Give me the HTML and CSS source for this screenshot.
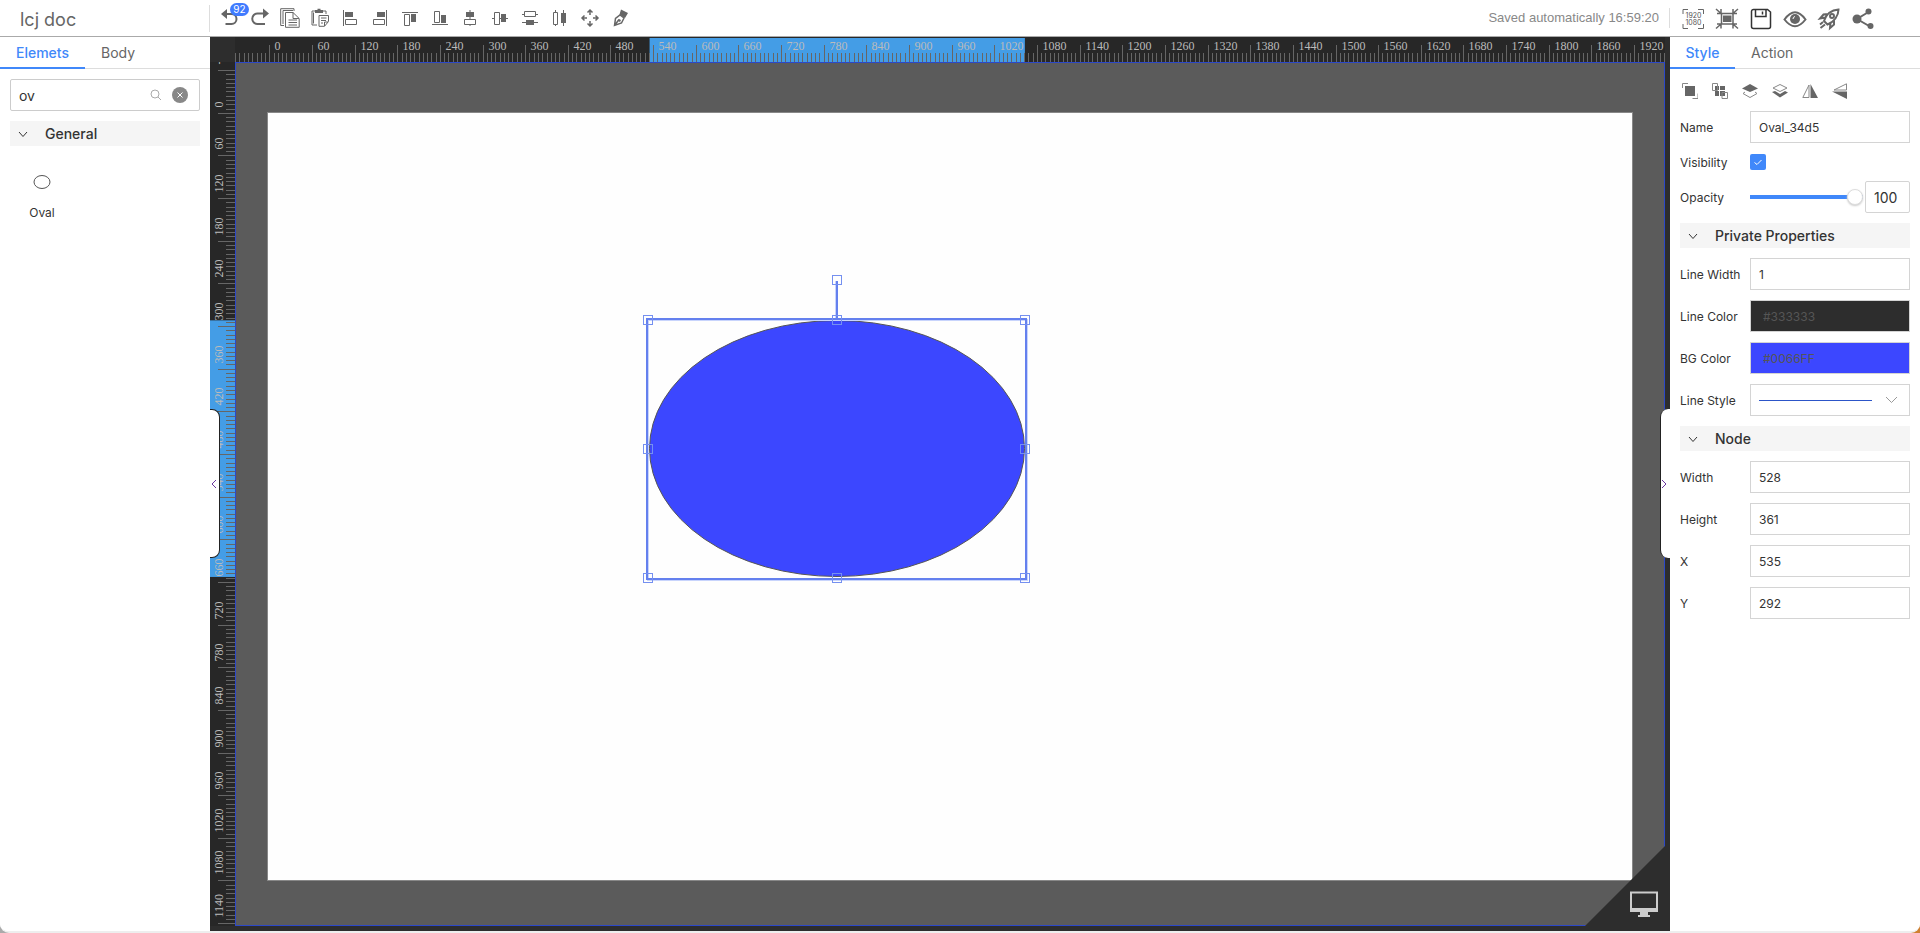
FILE: index.html
```html
<!DOCTYPE html>
<html lang="en">
<head>
<meta charset="utf-8">
<title>lcj doc</title>
<link rel="stylesheet" href="styles.css">
</head>
<body>
<div class="app">
<header class="topbar">
  <h1 class="doc-title">lcj doc</h1>
  <div class="tools">
    <button class="tool" aria-label="Undo"><svg viewBox="0 0 20 20" class="thick"><path d="M6.500 6H11.500a4.500 4.500 0 0 1 0 10H5.500"/><path class="fill" d="M1 6L7 1V11z"/></svg><span class="badge">92</span></button>
    <button class="tool" aria-label="Redo"><svg viewBox="0 0 20 20" class="thick"><path d="M13 5.500H7.500a5 5 0 0 0 0 10.500H15"/><path class="fill" d="M19 5.500L13 .500V10.500z"/></svg></button>
    <button class="tool" aria-label="Copy"><svg viewBox="0 0 20 20"><path d="M4 17.500H.700V.700H14V3"/><path d="M5.500 4.500H13L19.200 10.500V19.300H5.500zM13 4.500V10.500H19M8.500 12H17M8.500 14.500H17M8.500 17H17"/><path d="M3 16V2.500H13"/></svg></button>
    <button class="tool" aria-label="Paste"><svg viewBox="0 0 20 20"><path d="M7 17H2V3H5M13 3h3v3M3.500 15.500V4.500M9 18.300V7.500H18.500V13.500L14.500 18.300H9zM11 10H16.500M11 12.500H16M11 15H13M14.500 18V14H18"/><path class="fill" d="M5 2H7.500V.800H10.500V2H13V5H5z"/></svg></button>
    <button class="tool" aria-label="Align left"><svg viewBox="0 0 20 20"><path d="M3.500 2V18M5.500 11.500H16.500V16.500H5.500z"/><path class="fill" d="M5 4H13V9H5z"/></svg></button>
    <button class="tool" aria-label="Align right"><svg viewBox="0 0 20 20"><path d="M16.500 2V18M3.500 11.500H14.500V16.500H3.500z"/><path class="fill" d="M7 4H15V9H7z"/></svg></button>
    <button class="tool" aria-label="Align top"><svg viewBox="0 0 20 20"><path d="M2 4.500H18M4.500 6.500H9.500V17.500H4.500z"/><path class="fill" d="M11 6H16V14H11z"/></svg></button>
    <button class="tool" aria-label="Align bottom"><svg viewBox="0 0 20 20"><path d="M2 16.500H18M4.500 3.500H9.500V14.500H4.500z"/><path class="fill" d="M11 7H16V15H11z"/></svg></button>
    <button class="tool" aria-label="Align center"><svg viewBox="0 0 20 20"><path d="M10 2V18"/><path class="paper" d="M4.500 11.500H15.500V16.500H4.500z"/><path class="fill" d="M6 4H14V9H6z"/></svg></button>
    <button class="tool" aria-label="Align middle"><svg viewBox="0 0 20 20"><path d="M2 10.500H18"/><path class="paper" d="M4.500 4.500H9.500V16.500H4.500z"/><path class="fill" d="M11 6H16V14H11z"/></svg></button>
    <button class="tool" aria-label="Distribute vertically"><svg viewBox="0 0 20 20"><path d="M2 6.500H18M2 14.500H18"/><path class="paper" d="M4.500 3.500H15.500V8.500H4.500z"/><path class="fill" d="M6 12H14V17H6z"/></svg></button>
    <button class="tool" aria-label="Distribute horizontally"><svg viewBox="0 0 20 20"><path d="M5.500 2V18M13.500 2V18"/><path class="paper" d="M3.500 4.500H7.500V16.500H3.500z"/><path class="fill" d="M11 5H16V15H11z"/></svg></button>
    <button class="tool" aria-label="Move"><svg viewBox="0 0 20 20" class="bold"><path d="M10 2V7M10 13V18M2 10H7M13 10H18M7.500 4.500L10 2L12.500 4.500M7.500 15.500L10 18L12.500 15.500M4.500 7.500L2 10L4.500 12.500M15.500 7.500L18 10L15.500 12.500"/></svg></button>
    <button class="tool" aria-label="Format painter"><svg viewBox="0 0 20 20" class="bold"><path d="M4.500 17.500L5.500 10.500L10 7L14 10L11.500 15zM4.500 17.500L9 11.500"/><path class="fill" d="M11 1.500L18 5L15 10L9.500 6.500zM9 11l2 1-1 2-2-1z"/></svg></button>
  </div>
  <p class="saved">Saved automatically 16:59:20</p>
  <div class="actions">
    <button class="action" aria-label="Actual size"><svg viewBox="0 0 24 24"><path d="M2 7V2.500H7M17 2.500H22.500V7M2 17V21.500H7M17 21.500H22.500V17"/><text x="12.500" y="11">1920</text><text x="12.500" y="18">1080</text></svg></button>
    <button class="action" aria-label="Fit to screen"><svg viewBox="0 0 24 24" class="bold"><path d="M6.500 6.500H18V17H6.500z"/><path class="fill" d="M8 8.500H16.500V15H8z"/><path d="M1 2L5.500 6M2 6.500H6V2M23 2L18.500 6M22 6.500H18V2M1 21.500L5.500 17.500M2 17H6V21.500M23 21.500L18.500 17.500M22 17H18V21.500"/></svg></button>
    <button class="action" aria-label="Save"><svg viewBox="0 0 24 24" class="dark"><path d="M5.500 2.500H18.500L21.500 5V19.500A2 2 0 0 1 19.500 21.500H4.500A2 2 0 0 1 2.500 19.500V4.500A2 2 0 0 1 4.500 2.500zM6.500 3V9.500H17V3M13.500 4.500V7.500"/></svg></button>
    <button class="action" aria-label="Preview"><svg viewBox="0 0 24 24" class="medium"><path d="M1.500 12.500Q12 -2 22.500 12.500Q12 26 1.500 12.500z"/><circle cx="12" cy="12" r="5" class="fill"/><path class="glint" d="M10 12A2.500 2.500 0 0 1 12 9.500"/></svg></button>
    <button class="action" aria-label="Publish"><svg viewBox="0 0 24 24" class="medium"><path d="M7 14C9 8 14 3 21.500 2.500C21.500 9 17 15 10.500 17.500zM8.500 10.500L3 11.500L6.500 7.500L11 7M13.500 15.500L13 21L17 17.500L17 13M3 17.500L6 15M3.500 21L8 17.500"/><circle cx="15" cy="9" r="2"/></svg></button>
    <button class="action" aria-label="Share"><svg viewBox="0 0 24 24" class="medium"><path d="M17.500 5L6 12L19 19.500"/><circle class="fill" cx="6" cy="12" r="4.500"/><circle class="fill" cx="17.500" cy="4.500" r="3"/><circle class="fill" cx="19.500" cy="19" r="3"/></svg></button>
  </div>
</header>
<main class="workspace">
  <aside class="panel elements">
    <nav class="tabs"><button class="tab tab-wide active">Elemets</button><button class="tab">Body</button></nav>
    <div class="panel-body">
      <div class="search">
        <input type="text" value="ov" aria-label="Search elements">
        <svg class="lens" viewBox="0 0 12 12"><circle cx="5" cy="5" r="4"/><path d="M8 8L11 11"/></svg>
        <button class="clear" aria-label="Clear"><svg viewBox="0 0 16 16"><circle cx="8" cy="8" r="8"/><path d="M5.500 5.500L10.500 10.500M10.500 5.500L5.500 10.500"/></svg></button>
      </div>
      <button class="section"><svg viewBox="0 0 10 10"><path d="M1 3L5 7.500L9 3"/></svg>General</button>
      <div class="shapes">
        <button class="shape"><svg viewBox="0 0 18 18"><ellipse cx="9" cy="9" rx="8" ry="6.500"/></svg>Oval</button>
      </div>
    </div>
  </aside>
  <section class="stage">
    <svg class="ruler-top" id="ruler-top"></svg>
    <svg class="ruler-left" id="ruler-left"></svg>
    <div class="canvas">
      <svg class="scene" id="scene">
        <rect class="artboard" x="31.500" y="49.500" width="1365" height="768"/>
        <ellipse class="oval" cx="601" cy="385.500" rx="187.500" ry="128"/>
        <g class="selection">
          <path class="halo" d="M412 257H791V517H412zM600 257V218"/>
          <path d="M411 256H790V516H411zM601 256V218"/>
        </g>
        <g class="handles" id="handles"></g>
      </svg>
      <button class="corner" aria-label="Screen overview"><svg viewBox="0 0 80 80"><path class="wedge" d="M80 0V80H0z"/><path class="screen" d="M46 46.500H72V64H46z"/><path class="stand" d="M45 62H73V66H63V69H65V71H53V69H55V66H45z"/></svg></button>
    </div>
    <button class="drawer drawer-left" aria-label="Collapse left panel"><svg viewBox="0 0 6 8"><path d="M5 0L1 4L5 8"/></svg></button>
    <button class="drawer drawer-right" aria-label="Collapse right panel"><svg viewBox="0 0 6 8"><path d="M1 0L5 4L1 8"/></svg></button>
  </section>
  <aside class="panel properties">
    <nav class="tabs"><button class="tab active">Style</button><button class="tab">Action</button></nav>
    <form class="panel-body">
      <div class="arrange">
        <button type="button" aria-label="Group"><svg viewBox="0 0 16 16"><path class="line" d="M.500 5V.500H6M16 10.500V15.500H10.500"/><path d="M3 3H13V13H3z"/></svg></button>
        <button type="button" aria-label="Ungroup"><svg viewBox="0 0 16 16"><path d="M3 3H7V7H3zM8 3H13V7H8zM3 8H7V13H3zM8 8H13V13H8z"/><path class="line" d="M.500 .500H5.500V7.500H.500zM10 9.500H15.500V15.500H10z"/></svg></button>
        <button type="button" aria-label="Bring to front"><svg viewBox="0 0 16 16"><path d="M8 1L16 5.500L8 9L0 5.500z"/><path class="line" d="M3 9L1 10.500L8 14.500L15 10.500L13 9"/></svg></button>
        <button type="button" aria-label="Send to back"><svg viewBox="0 0 16 16"><path class="line" d="M8 1.500L15 5L8 8.500L1 5z"/><path d="M0 9L3 8L8 11L13 8L16 9.500L8 14.500z"/></svg></button>
        <button type="button" aria-label="Flip horizontally"><svg viewBox="0 0 16 16"><path class="line" d="M7 2V14.500H.800z"/><path d="M8.500 1L16 15H8.500z"/></svg></button>
        <button type="button" aria-label="Flip vertically"><svg viewBox="0 0 16 16"><path class="line" d="M14.500 .800V7H2z"/><path d="M0 8.500H15V16z"/></svg></button>
      </div>
      <div class="field"><label for="name">Name</label><input id="name" type="text" value="Oval_34d5"></div>
      <div class="field short"><label for="visible">Visibility</label><span class="check"><input id="visible" type="checkbox" checked><svg viewBox="0 0 16 16"><path d="M4.500 8.500L7 10.500L11.500 6"/></svg></span></div>
      <div class="field"><label for="opacity">Opacity</label><input id="opacity" class="slider" type="range" value="100"><input class="amount" type="text" value="100" aria-label="Opacity value"></div>
      <button type="button" class="section"><svg viewBox="0 0 10 10"><path d="M1 3L5 7.500L9 3"/></svg>Private Properties</button>
      <div class="field"><label for="line-width">Line Width</label><input id="line-width" type="text" value="1"></div>
      <div class="field"><label for="line-color">Line Color</label><input id="line-color" class="swatch ink" type="text" value="#333333"></div>
      <div class="field"><label for="bg-color">BG Color</label><input id="bg-color" class="swatch blue" type="text" value="#0066FF"></div>
      <div class="field"><label for="line-style">Line Style</label><span class="picker"><select id="line-style"><option aria-label="Solid"></option></select><svg viewBox="0 0 158 30"><path class="sample" d="M8 15.500H121"/><path d="M135 12L140.500 17.500L146 12"/></svg></span></div>
      <button type="button" class="section"><svg viewBox="0 0 10 10"><path d="M1 3L5 7.500L9 3"/></svg>Node</button>
      <div class="field"><label for="width">Width</label><input id="width" type="text" value="528"></div>
      <div class="field"><label for="height">Height</label><input id="height" type="text" value="361"></div>
      <div class="field"><label for="x">X</label><input id="x" type="text" value="535"></div>
      <div class="field"><label for="y">Y</label><input id="y" type="text" value="292"></div>
    </form>
  </aside>
</main>
</div>
<script src="rulers.js"></script>
</body>
</html>
```
FILE: styles.css
```css
* { box-sizing: border-box; }
html { background: linear-gradient(to right, #aaa 50%, #d08030 50%); }
body { margin: 0; font-family: Inter, "Liberation Sans", sans-serif; font-size: 12px; color: #333; }
button, input, select { font: inherit; color: inherit; margin: 0; }
button { border: 0; padding: 0; background: none; }
svg { display: block; }

.app { display: flex; flex-direction: column; height: 100vh; background: #fff; border-bottom: 2px solid #eee; border-radius: 0 0 9px 9px; overflow: hidden; }

.topbar { display: flex; align-items: center; height: 37px; flex: none; border-bottom: 1px solid #aaa; }
.doc-title { width: 210px; margin: 0; padding: 2px 0 0 20px; height: 27px; line-height: 25px; font-size: 18px; font-weight: 400; color: #666; border-right: 1px solid #ddd; }
.tools { display: flex; padding-left: 5px; flex: 1; }
.tool { position: relative; width: 30px; height: 30px; padding: 5px; }
.tool svg { width: 20px; height: 20px; }
.tool path, .action path, .action circle { fill: none; stroke: #666; stroke-width: 1; }
.tool .thick path { stroke-width: 2; }
.tool .bold path, .action .bold path { stroke-width: 1.5; }
.tool .paper { fill: #fff; }
.tool .fill, .tool .thick .fill, .action .fill { fill: #666; stroke: none; }
.badge { position: absolute; left: 15px; top: 0; width: 19px; height: 13px; border-radius: 7px; background: #407bff; color: #fff; font-size: 10px; line-height: 13px; text-align: center; }
.saved { margin: 0; padding-right: 10px; height: 20px; line-height: 20px; font-family: "Liberation Sans", sans-serif; font-size: 13px; color: #888; border-right: 1px solid #ddd; }
.actions { display: flex; width: 250px; padding-left: 6px; }
.action { width: 34px; height: 34px; padding: 6px 5px 4px; }
.action svg { width: 24px; height: 24px; }
.action .medium path, .action .medium circle { stroke-width: 2; }
.action .dark path { stroke: #333; stroke-width: 1.5; }
.action .medium .glint { stroke: #fff; stroke-width: 1; }
.action text { font-size: 7px; text-anchor: middle; fill: #555; }

.workspace { display: flex; flex: 1; min-height: 0; }
.panel { flex: none; background: #fff; }
.elements { width: 210px; }
.properties { width: 250px; }
.tabs { display: flex; height: 32px; border-bottom: 1px solid #ddd; }
.tab { height: 32px; padding: 0 16px; font-size: 14px; color: #666; border-bottom: 2px solid transparent; }
.tab.active { color: #4088fa; border-color: #4088fa; font-weight: 500; padding: 0; width: 65px; }
.tab.tab-wide { width: 85px; }
.panel-body { display: flex; flex-direction: column; gap: 10px; padding: 10px; }

.search { display: flex; align-items: center; height: 32px; padding: 0 11px 0 8px; border: 1px solid #ccc; border-radius: 2px; }
.search input { flex: 1; min-width: 0; border: 0; padding: 0; font-size: 14px; outline: 0; }
.lens { width: 12px; height: 12px; margin-right: 10px; fill: none; stroke: #aaa; }
.clear svg { width: 16px; height: 16px; fill: #888; }
.clear path { stroke: #fff; }
.section { display: flex; align-items: center; gap: 17px; height: 25px; padding-left: 8px; background: #f5f5f5; font-size: 14px; font-weight: 500; text-align: left; }
.section svg { width: 10px; height: 10px; fill: none; stroke: #333; }
.shapes { padding-top: 17px; }
.shape { display: flex; flex-direction: column; align-items: center; gap: 14px; width: 64px; }
.shape svg { width: 18px; height: 18px; fill: none; stroke: #555; }

.stage { position: relative; flex: 1; min-width: 0; display: grid; grid-template: 25px 1fr / 25px 1fr; padding: 0 5px 5px 0; background: #2d2d2d; }
.ruler-top { grid-column: 2; width: 100%; height: 25px; background: #272727; }
.ruler-left { grid-column: 1; width: 25px; height: 100%; background: #272727; }
.ruler-top text, .ruler-left text { font-family: "Liberation Serif", serif; font-size: 12px; fill: #bbb; }
.ruler-top path, .ruler-left path { stroke: #666; fill: none; shape-rendering: crispEdges; }
.span { fill: #449de6; }
.canvas { position: relative; min-height: 0; background: #5b5b5b; border: 1px solid #2c48c8; }
.scene { width: 100%; height: 100%; }
.artboard { fill: #fefefe; stroke: #888; }
.oval { fill: #3c47ff; stroke: #555; }
.selection path { fill: none; stroke: #6480ee; stroke-width: 2; }
.selection .halo { stroke: #c8d4fc; }
.handles rect { fill: none; stroke: #7590f0; }
.corner { position: absolute; right: -1px; bottom: -1px; }
.corner svg { width: 80px; height: 80px; }
.wedge { fill: #2d2d2d; }
.screen { fill: none; stroke: #ccc; stroke-width: 2; }
.stand { fill: #ccc; }
.drawer { position: absolute; top: 372px; width: 10px; height: 149px; background: #fff; display: flex; align-items: center; justify-content: flex-start; }
.drawer svg { width: 6px; height: 8px; fill: none; stroke: #6a35a0; }
.drawer-left { left: 0; padding-left: 1px; border: solid #222; border-width: 1px 1px 1px 0; border-radius: 0 8px 8px 0; }
.drawer-right { right: 0; border-left: 1px solid #222; border-radius: 8px 0 0 8px; }

.arrange { display: flex; gap: 14px; padding: 4px 2px 2px; }
.arrange svg { width: 16px; height: 16px; fill: #666; }
.arrange .line { fill: none; stroke: #888; }
.field { display: flex; align-items: center; height: 32px; }
.field.short { height: 18px; }
.field label { width: 70px; flex: none; }
.field input[type="text"] { flex: 1; min-width: 0; height: 32px; padding: 0 8px; border: 1px solid #d4d4d4; border-radius: 0; outline: 0; }
.field input.swatch[type="text"] { padding-left: 12px; color: #555; }
.field .ink { background: #2d2d2d; }
.field .blue { background: #3c47ff; }
.field input.amount[type="text"] { flex: none; width: 45px; border-radius: 2px; font-size: 14px; }
.check, .picker { display: grid; }
.check > *, .picker > * { grid-area: 1 / 1; }
.check input { appearance: none; width: 16px; height: 16px; border-radius: 2px; background: #4088fa; }
.check svg { width: 16px; fill: none; stroke: #fff; pointer-events: none; }
.slider { appearance: none; flex: 1; min-width: 0; height: 16px; margin-right: 2px; background: linear-gradient(#4088fa, #4088fa) center / 100% 4px no-repeat; }
.slider::-webkit-slider-thumb { appearance: none; width: 16px; height: 16px; border: 1px solid #ddd; border-radius: 50%; background: #fff; box-shadow: 0 1px 2px #ccc; }
.picker { flex: 1; height: 32px; }
.picker select { appearance: none; width: 100%; height: 32px; border: 1px solid #d4d4d4; background: #fff; border-radius: 0; }
.picker svg { width: 100%; height: 32px; padding: 1px; fill: none; stroke: #999; pointer-events: none; }
.picker .sample { stroke: #2c55c8; }
```
FILE: rulers.js
```js
const NS = 'http://www.w3.org/2000/svg';
const SCALE = 0.7108;
const node = { x: 535, y: 292, width: 528, height: 361 };

function add(parent, tag, attrs, text) {
  const el = document.createElementNS(NS, tag);
  for (const key in attrs) el.setAttribute(key, attrs[key]);
  if (text !== undefined) el.textContent = text;
  parent.appendChild(el);
}

function drawRuler(id, vertical, origin, start, size) {
  const svg = document.getElementById(id);
  const length = vertical ? svg.clientHeight : svg.clientWidth;
  const from = origin + start * SCALE;
  svg.replaceChildren();
  add(svg, 'rect', vertical
    ? { class: 'span', x: 0, y: from, width: 25, height: size * SCALE }
    : { class: 'span', x: from, y: 1, width: size * SCALE, height: 24 });
  let ticks = '';
  for (let unit = -60; origin + unit * SCALE < length; unit += 6) {
    const at = Math.round(origin + unit * SCALE) + 0.5;
    const major = unit % 60 === 0;
    if (at < 0) continue;
    ticks += vertical ? `M${major ? 8 : 16} ${at}H25` : `M${at} ${major ? 8 : 16}V25`;
    if (major) {
      if (vertical) add(svg, 'text', { transform: `translate(13 ${at - 6}) rotate(-90)` }, unit);
      else add(svg, 'text', { x: at + 5, y: 13 }, unit);
    }
  }
  add(svg, 'path', { d: ticks });
}

function drawRulers() {
  drawRuler('ruler-top', false, 34.3, node.x, node.width);
  drawRuler('ruler-left', true, 50.8, node.y, node.height);
}

const handles = document.getElementById('handles');
for (const x of [412, 601, 789]) {
  for (const y of [257, 386, 515]) {
    if (x === 601 && y === 386) continue;
    add(handles, 'rect', { x: x - 4.5, y: y - 4.5, width: 9, height: 9 });
  }
}
add(handles, 'rect', { x: 596.5, y: 212.5, width: 9, height: 9 });
drawRulers();
addEventListener('resize', drawRulers);
```
